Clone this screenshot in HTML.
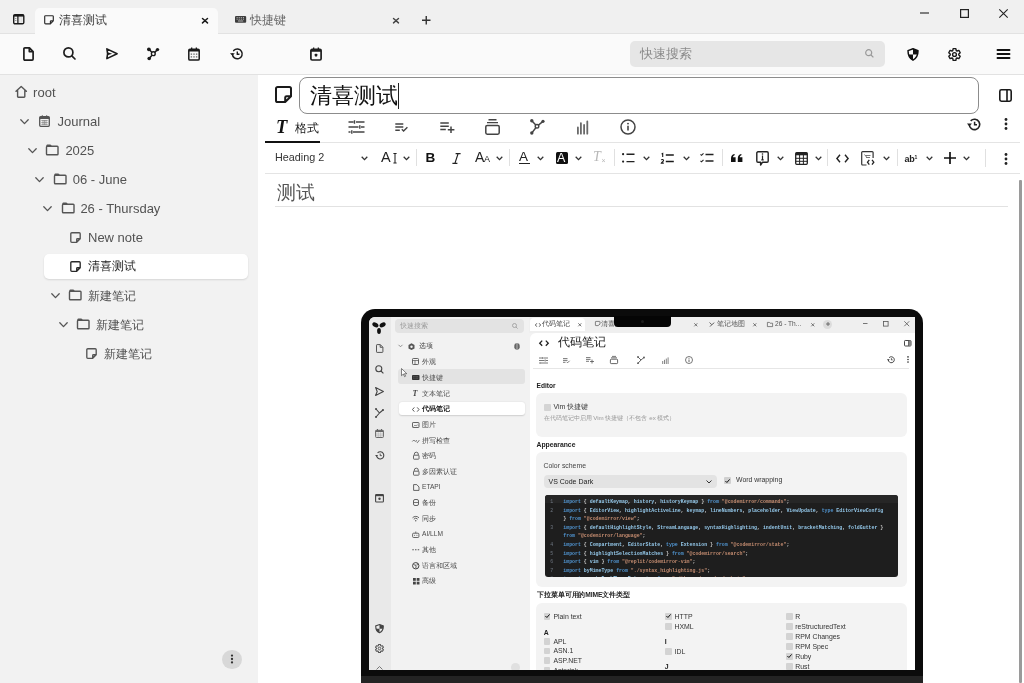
<!DOCTYPE html>
<html><head><meta charset="utf-8">
<style>
*{box-sizing:border-box;margin:0;padding:0}
html,body{width:1024px;height:683px;overflow:hidden;background:#fff;font-family:"Liberation Sans",sans-serif;color:#333}
.a{position:absolute}
svg.i{position:absolute;overflow:visible}
.s{fill:none;stroke:#1e1e1e;stroke-width:1.7;stroke-linecap:round;stroke-linejoin:round}
.f{fill:#1e1e1e;stroke:none}
#tabbar{left:0;top:0;width:1024px;height:34px;background:#f0f0f0;border-bottom:1px solid #e2e2e2}
#toolbar{left:0;top:34px;width:1024px;height:41px;background:#fafafa;border-bottom:1px solid #e2e2e2}
#sidebar{left:0;top:75px;width:258px;height:608px;background:#f2f2f2}
#main{left:258px;top:75px;width:766px;height:608px;background:#fff}
.t{position:absolute;white-space:nowrap;font-size:13px;line-height:16px;color:#4a4a4a}
</style></head><body>
<div id="wrap" style="position:absolute;left:0;top:0;width:1024px;height:683px;will-change:transform">
<div id="tabbar" class="a"></div>
<div id="toolbar" class="a"></div>
<div id="sidebar" class="a"></div>
<div id="main" class="a"></div>

<!-- ===== TAB BAR ===== -->
<svg class="i" style="left:13.4px;top:14.3px" width="11.5" height="10.5" viewBox="0 0 11.5 10.5"><rect x="0.7" y="0.7" width="10.1" height="9.1" rx="1.3" fill="none" stroke="#1a1a1a" stroke-width="1.4"/><path d="M0.7 0.7h10.1v1.9H0.7z" fill="#1a1a1a"/><path d="M4.9 1v8.8" stroke="#1a1a1a" stroke-width="1.3"/><path d="M2.8 4v1M2.8 6v1" stroke="#666" stroke-width="0.9"/><path d="M6.8 3v5.5M8.8 3v5.5" stroke="#ccc" stroke-width="0.6"/></svg>
<div class="a" style="left:34.5px;top:7.5px;width:183px;height:26.5px;background:#fafafa;border-radius:5px 5px 0 0"></div>
<svg class="i" style="left:44.3px;top:15px" width="10" height="9.5" viewBox="0 0 10 9.5"><path d="M1.6 0.7h6.8a0.9 0.9 0 0 1 0.9 0.9v4.2L6.4 8.8H1.6a0.9 0.9 0 0 1-0.9-0.9V1.6a0.9 0.9 0 0 1 0.9-0.9zM9.3 5.8H7.1a0.7 0.7 0 0 0-0.7 0.7v2.3" fill="none" stroke="#2a2a2a" stroke-width="1.15" stroke-linejoin="round"/></svg>
<div class="t" style="left:58.5px;top:11.8px;font-size:12px;color:#3a3a3a">清喜测试</div>
<svg class="i" style="left:202.2px;top:17.7px" width="6" height="5.4" viewBox="0 0 6 5.4"><path d="M0.5 0.5l5 4.4M5.5 0.5l-5 4.4" stroke="#1a1a1a" stroke-width="1.5" stroke-linecap="round"/></svg>
<svg class="i" style="left:235px;top:15.9px" width="11.2" height="6.8" viewBox="0 0 11.2 6.8"><rect x="0" y="0" width="11.2" height="6.8" rx="1.1" fill="#3c3c3c"/><path d="M1.6 1.6h1.1M3.7 1.6h1.1M5.8 1.6h1.1M7.9 1.6h1.1M1.6 3.2h1.1M3.7 3.2h1.1M5.8 3.2h1.1M7.9 3.2h1.1M3 5h5.2" stroke="#d8d8d8" stroke-width="0.8"/></svg>
<div class="t" style="left:250px;top:11.8px;font-size:12px;color:#666">快捷键</div>
<svg class="i" style="left:393.3px;top:17.6px" width="6" height="5.4" viewBox="0 0 6 5.4"><path d="M0.5 0.5l5 4.4M5.5 0.5l-5 4.4" stroke="#444" stroke-width="1.4" stroke-linecap="round"/></svg>
<svg class="i" style="left:421.6px;top:16.2px" width="8.5" height="8.5" viewBox="0 0 8.5 8.5"><path d="M4.25 0v8.5M0 4.25h8.5" stroke="#333" stroke-width="1.4"/></svg>
<svg class="i" style="left:920px;top:12px" width="10" height="2" viewBox="0 0 10 2"><path d="M0 1h9" stroke="#222" stroke-width="1.1"/></svg>
<svg class="i" style="left:960px;top:9px" width="9" height="9" viewBox="0 0 9 9"><rect x="0.6" y="0.6" width="7.8" height="7.8" fill="none" stroke="#222" stroke-width="1.2"/></svg>
<svg class="i" style="left:999px;top:9px" width="9" height="9" viewBox="0 0 9 9"><path d="M0.3 0.3l8.4 8.4M8.7 0.3L0.3 8.7" stroke="#222" stroke-width="1.1"/></svg>

<!-- ===== TOOLBAR ===== -->
<!-- new note -->
<svg class="i" style="left:23px;top:47px" width="11" height="14" viewBox="0 0 11 14"><path class="s" d="M1.9 0.9h4.6l3.6 3.6v7.6a1 1 0 0 1-1 1H1.9a1 1 0 0 1-1-1V1.9a1 1 0 0 1 1-1zM6.3 1v3.6h3.7" stroke-width="1.7"/></svg>
<!-- search -->
<svg class="i" style="left:63px;top:47px" width="13" height="13" viewBox="0 0 13 13"><circle class="s" cx="5.4" cy="5.4" r="4.5" stroke-width="1.7"/><path class="s" d="M8.8 8.8l3.2 3.2" stroke-width="1.7"/></svg>
<!-- send -->
<svg class="i" style="left:105.8px;top:48.3px" width="12" height="11.5" viewBox="0 0 12 11.5"><path d="M0.9 0.9L11.1 5.75 0.9 10.6 1.6 5.75z" fill="none" stroke="#1a1a1a" stroke-width="1.6" stroke-linejoin="round"/><path d="M1.4 4.2L6.2 5.75 1.4 7.3z" fill="#1a1a1a"/></svg>
<!-- graph -->
<svg class="i" style="left:146px;top:47px" width="14" height="14" viewBox="0 0 14 14"><path d="M2.9 2.3L7.3 6.7M11.5 2.6L7.3 6.7M3.2 11.5L7.3 6.7" stroke="#1a1a1a" stroke-width="1.5"/><circle cx="2.9" cy="2.3" r="1.9" fill="#1a1a1a"/><circle cx="11.5" cy="2.6" r="1.7" fill="#1a1a1a"/><circle cx="3.2" cy="11.5" r="1.8" fill="#1a1a1a"/><circle cx="7.3" cy="6.7" r="1.9" fill="#fafafa" stroke="#1a1a1a" stroke-width="1.4"/></svg>
<!-- calendar -->
<svg class="i" style="left:188px;top:47px" width="12" height="14" viewBox="0 0 12 14"><rect x="0.8" y="2.3" width="10.4" height="10.8" rx="1.2" fill="none" stroke="#1a1a1a" stroke-width="1.5"/><path d="M0.8 2.3h10.4v2.2H0.8zM3 0.4h1.3v2.2H3zM7.7 0.4H9v2.2H7.7z" fill="#1a1a1a"/><path d="M2.7 6.4h1.4v1.3H2.7zM5.3 6.4h1.4v1.3H5.3zM7.9 6.4h1.4v1.3H7.9zM2.7 9.2h1.4v1.3H2.7zM5.3 9.2h1.4v1.3H5.3zM7.9 9.2h1.4v1.3H7.9z" fill="#666"/></svg>
<!-- history -->
<svg class="i" style="left:229.5px;top:48px" width="13" height="12" viewBox="0 0 13 12"><path d="M2.4 6a4.9 4.9 0 1 0 1.3-3.4" fill="none" stroke="#1a1a1a" stroke-width="1.5" stroke-linecap="round"/><path d="M0 5.3l2.4 2.5 2.4-2.5z" fill="#1a1a1a"/><path d="M7.3 3.5v2.7h2.2" fill="none" stroke="#1a1a1a" stroke-width="1.4"/></svg>
<!-- calendar star -->
<svg class="i" style="left:310px;top:47px" width="12" height="14" viewBox="0 0 12 14"><rect class="s" x="0.9" y="2.4" width="10.2" height="10.6" rx="1.2" stroke-width="1.7"/><path class="f" d="M0.9 2.4h10.2v2.4H0.9zM3 0.6h1.3v2H3zM7.7 0.6H9v2H7.7z"/><path class="f" d="M6 6.4l1.6 1.2-0.6 1.9H5l-0.6-1.9z"/></svg>
<!-- search box -->
<div class="a" style="left:630px;top:41px;width:255px;height:26px;background:#e6e6e6;border-radius:5px"></div>
<div class="t" style="left:640px;top:46px;font-size:12.5px;color:#8a8a8a">快速搜索</div>
<svg class="i" style="left:865px;top:49px" width="9" height="9" viewBox="0 0 9 9"><circle cx="3.7" cy="3.7" r="3" fill="none" stroke="#999" stroke-width="1.2"/><path d="M6 6l2.4 2.4" stroke="#999" stroke-width="1.2"/></svg>
<!-- shield -->
<svg class="i" style="left:907px;top:48px" width="12" height="13" viewBox="0 0 12 13"><path d="M6 0.8L11 2.6c0 5-2 8.1-5 9.6C3 10.7 1 7.6 1 2.6z" fill="#fafafa" stroke="#111" stroke-width="1.5" stroke-linejoin="round"/><path d="M6 0.8v5.7h5c0.1-1.2 0-2.5 0-3.9zM6 6.5H1.4c0.6 2.8 2.2 4.7 4.6 5.7z" fill="#111"/></svg>
<!-- gear -->
<svg class="i" style="left:948px;top:47.5px" width="13" height="13" viewBox="0 0 13 13"><path d="M4.75 2.57 L5.15 0.65 L7.85 0.65 L8.25 2.57 L9.03 3.02 L10.89 2.41 L12.24 4.75 L10.78 6.05 L10.78 6.95 L12.24 8.25 L10.89 10.59 L9.03 9.98 L8.25 10.43 L7.85 12.35 L5.15 12.35 L4.75 10.43 L3.97 9.98 L2.11 10.59 L0.76 8.25 L2.22 6.95 L2.22 6.05 L0.76 4.75 L2.11 2.41 L3.97 3.02Z" fill="none" stroke="#1a1a1a" stroke-width="1.4" stroke-linejoin="round"/><circle cx="6.5" cy="6.5" r="1.9" fill="none" stroke="#1a1a1a" stroke-width="1.4"/></svg>
<!-- hamburger -->
<svg class="i" style="left:997px;top:49px" width="13" height="10" viewBox="0 0 13 10"><path d="M0.5 1h12M0.5 5h12M0.5 9h12" stroke="#111" stroke-width="1.9" stroke-linecap="round"/></svg>

<!-- ===== SIDEBAR TREE ===== -->
<div class="a" style="left:44px;top:253.5px;width:204px;height:25.5px;background:#fff;border-radius:5px;box-shadow:0 1px 2px rgba(0,0,0,0.12)"></div>
<div class="a" style="left:222px;top:649.5px;width:19.5px;height:19.5px;border-radius:10px;background:#d8d8d8"></div>
<svg class="i" style="left:229.8px;top:654px" width="4" height="10" viewBox="0 0 4 10"><circle cx="2" cy="1.6" r="1.15" fill="#333"/><circle cx="2" cy="5" r="1.15" fill="#333"/><circle cx="2" cy="8.4" r="1.15" fill="#333"/></svg>
<svg class="i" style="left:14.5px;top:86.0px" width="13" height="12" viewBox="0 0 13 12"><path d="M1 5.2L6.2 0.6l5.2 4.6M2.6 4v6.6a0.7 0.7 0 0 0 0.7 0.7h5.8a0.7 0.7 0 0 0 0.7-0.7V4" fill="none" stroke="#555" stroke-width="1.4" stroke-linecap="round" stroke-linejoin="round"/></svg>
<div class="t" style="left:33.1px;top:calc(84.0px + 0.6px);font-size:13px;color:#525252">root</div>
<svg class="i" style="left:20.0px;top:118.8px" width="9" height="6" viewBox="0 0 9 6"><path d="M0.8 0.8l3.7 3.8 3.7-3.8" fill="none" stroke="#555" stroke-width="1.3" stroke-linecap="round" stroke-linejoin="round"/></svg>
<svg class="i" style="left:39.0px;top:114.5px" width="11" height="12" viewBox="0 0 11 12"><rect x="0.7" y="1.7" width="9.6" height="9.6" rx="1" fill="none" stroke="#555" stroke-width="1.3"/><path d="M0.7 1.7h9.6v2.2H0.7zM2.8 0.3h1v1.6h-1zM7.2 0.3h1v1.6h-1z" fill="#555"/><path d="M2.3 5.5h6.4M2.3 7.5h6.4M2.3 9.4h6.4M4 5v5M5.5 5v5M7 5v5" stroke="#888" stroke-width="0.7"/></svg>
<div class="t" style="left:57.5px;top:calc(113.0px + 0.6px);font-size:13px;color:#525252">Journal</div>
<svg class="i" style="left:27.7px;top:147.8px" width="9" height="6" viewBox="0 0 9 6"><path d="M0.8 0.8l3.7 3.8 3.7-3.8" fill="none" stroke="#555" stroke-width="1.3" stroke-linecap="round" stroke-linejoin="round"/></svg>
<svg class="i" style="left:46.0px;top:144.0px" width="13" height="11" viewBox="0 0 13 11"><path d="M1.3 2.2h9.9a0.8 0.8 0 0 1 0.8 0.8v6.9a0.8 0.8 0 0 1-0.8 0.8H1.3a0.8 0.8 0 0 1-0.8-0.8V3a0.8 0.8 0 0 1 0.8-0.8z" fill="none" stroke="#555" stroke-width="1.4"/><path d="M0.5 2.6V1.3Q0.5 0.4 1.4 0.4h2.8Q4.8 0.4 5.1 0.9L5.9 2.6z" fill="#555"/></svg>
<div class="t" style="left:65.4px;top:calc(142.0px + 0.6px);font-size:13px;color:#525252">2025</div>
<svg class="i" style="left:35.4px;top:176.8px" width="9" height="6" viewBox="0 0 9 6"><path d="M0.8 0.8l3.7 3.8 3.7-3.8" fill="none" stroke="#555" stroke-width="1.3" stroke-linecap="round" stroke-linejoin="round"/></svg>
<svg class="i" style="left:53.9px;top:173.0px" width="13" height="11" viewBox="0 0 13 11"><path d="M1.3 2.2h9.9a0.8 0.8 0 0 1 0.8 0.8v6.9a0.8 0.8 0 0 1-0.8 0.8H1.3a0.8 0.8 0 0 1-0.8-0.8V3a0.8 0.8 0 0 1 0.8-0.8z" fill="none" stroke="#555" stroke-width="1.4"/><path d="M0.5 2.6V1.3Q0.5 0.4 1.4 0.4h2.8Q4.8 0.4 5.1 0.9L5.9 2.6z" fill="#555"/></svg>
<div class="t" style="left:72.8px;top:calc(171.0px + 0.6px);font-size:13px;color:#525252">06 - June</div>
<svg class="i" style="left:43.2px;top:205.8px" width="9" height="6" viewBox="0 0 9 6"><path d="M0.8 0.8l3.7 3.8 3.7-3.8" fill="none" stroke="#555" stroke-width="1.3" stroke-linecap="round" stroke-linejoin="round"/></svg>
<svg class="i" style="left:61.5px;top:202.0px" width="13" height="11" viewBox="0 0 13 11"><path d="M1.3 2.2h9.9a0.8 0.8 0 0 1 0.8 0.8v6.9a0.8 0.8 0 0 1-0.8 0.8H1.3a0.8 0.8 0 0 1-0.8-0.8V3a0.8 0.8 0 0 1 0.8-0.8z" fill="none" stroke="#555" stroke-width="1.4"/><path d="M0.5 2.6V1.3Q0.5 0.4 1.4 0.4h2.8Q4.8 0.4 5.1 0.9L5.9 2.6z" fill="#555"/></svg>
<div class="t" style="left:80.4px;top:calc(200.0px + 0.6px);font-size:13px;color:#525252">26 - Thursday</div>
<svg class="i" style="left:69.8px;top:231.5px" width="11" height="11" viewBox="0 0 11 11"><path d="M1.8 0.7h7.4a1 1 0 0 1 1 1v5l-3.5 3.6H1.8a1 1 0 0 1-1-1V1.7a1 1 0 0 1 1-1zM10.2 6.7H7.5a0.8 0.8 0 0 0-0.8 0.8v2.8" fill="none" stroke="#555" stroke-width="1.35" stroke-linejoin="round"/></svg>
<div class="t" style="left:88.0px;top:calc(229.0px + 0.6px);font-size:13px;color:#525252">New note</div>
<svg class="i" style="left:69.8px;top:260.5px" width="11" height="11" viewBox="0 0 11 11"><path d="M1.8 0.7h7.4a1 1 0 0 1 1 1v5l-3.5 3.6H1.8a1 1 0 0 1-1-1V1.7a1 1 0 0 1 1-1zM10.2 6.7H7.5a0.8 0.8 0 0 0-0.8 0.8v2.8" fill="none" stroke="#2a2a2a" stroke-width="1.35" stroke-linejoin="round"/></svg>
<div class="t" style="left:88.0px;top:257.6px;font-size:12.25px;color:#222">清喜测试</div>
<svg class="i" style="left:51.2px;top:292.8px" width="9" height="6" viewBox="0 0 9 6"><path d="M0.8 0.8l3.7 3.8 3.7-3.8" fill="none" stroke="#555" stroke-width="1.3" stroke-linecap="round" stroke-linejoin="round"/></svg>
<svg class="i" style="left:69.2px;top:289.0px" width="13" height="11" viewBox="0 0 13 11"><path d="M1.3 2.2h9.9a0.8 0.8 0 0 1 0.8 0.8v6.9a0.8 0.8 0 0 1-0.8 0.8H1.3a0.8 0.8 0 0 1-0.8-0.8V3a0.8 0.8 0 0 1 0.8-0.8z" fill="none" stroke="#555" stroke-width="1.4"/><path d="M0.5 2.6V1.3Q0.5 0.4 1.4 0.4h2.8Q4.8 0.4 5.1 0.9L5.9 2.6z" fill="#555"/></svg>
<div class="t" style="left:88.2px;top:287.7px;font-size:12.25px;color:#525252">新建笔记</div>
<svg class="i" style="left:58.9px;top:321.8px" width="9" height="6" viewBox="0 0 9 6"><path d="M0.8 0.8l3.7 3.8 3.7-3.8" fill="none" stroke="#555" stroke-width="1.3" stroke-linecap="round" stroke-linejoin="round"/></svg>
<svg class="i" style="left:76.9px;top:318.0px" width="13" height="11" viewBox="0 0 13 11"><path d="M1.3 2.2h9.9a0.8 0.8 0 0 1 0.8 0.8v6.9a0.8 0.8 0 0 1-0.8 0.8H1.3a0.8 0.8 0 0 1-0.8-0.8V3a0.8 0.8 0 0 1 0.8-0.8z" fill="none" stroke="#555" stroke-width="1.4"/><path d="M0.5 2.6V1.3Q0.5 0.4 1.4 0.4h2.8Q4.8 0.4 5.1 0.9L5.9 2.6z" fill="#555"/></svg>
<div class="t" style="left:95.9px;top:316.7px;font-size:12.25px;color:#525252">新建笔记</div>
<svg class="i" style="left:85.5px;top:347.5px" width="11" height="11" viewBox="0 0 11 11"><path d="M1.8 0.7h7.4a1 1 0 0 1 1 1v5l-3.5 3.6H1.8a1 1 0 0 1-1-1V1.7a1 1 0 0 1 1-1zM10.2 6.7H7.5a0.8 0.8 0 0 0-0.8 0.8v2.8" fill="none" stroke="#555" stroke-width="1.35" stroke-linejoin="round"/></svg>
<div class="t" style="left:103.7px;top:345.8px;font-size:12.25px;color:#525252">新建笔记</div>
<!-- ===== MAIN: TITLE ===== -->
<svg class="i" style="left:275px;top:86px" width="17" height="17" viewBox="0 0 17 17"><path d="M2.6 1h11.8a1.6 1.6 0 0 1 1.6 1.6v7.6L10.2 16H2.6A1.6 1.6 0 0 1 1 14.4V2.6A1.6 1.6 0 0 1 2.6 1zM16 10.2h-4.4a1.4 1.4 0 0 0-1.4 1.4V16" fill="none" stroke="#1a1a1a" stroke-width="2" stroke-linejoin="round"/></svg>
<div class="a" style="left:299.3px;top:77.3px;width:679.5px;height:36.5px;border:1.7px solid #8c8c8c;border-radius:8px"></div>
<div class="t" style="left:310px;top:81.8px;font-size:22px;line-height:28px;color:#111">清喜测试</div>
<div class="a" style="left:398px;top:82.5px;width:1px;height:26px;background:#222"></div>
<svg class="i" style="left:999px;top:89px" width="13" height="13" viewBox="0 0 13 13"><rect x="0.8" y="0.8" width="11.4" height="11.4" rx="1.6" fill="none" stroke="#1a1a1a" stroke-width="1.6"/><path d="M8 1v11" stroke="#1a1a1a" stroke-width="1.6"/></svg>

<!-- ===== RIBBON ===== -->
<div class="a" style="left:265px;top:142px;width:755px;height:1px;background:#e4e4e4"></div>
<div class="a" style="left:265px;top:141px;width:55px;height:2px;background:#111"></div>
<div class="t" style="left:276px;top:117px;font-size:18.5px;line-height:20px;font-family:'Liberation Serif',serif;font-weight:bold;font-style:italic;color:#111">T</div>
<div class="t" style="left:295px;top:120px;font-size:12px;line-height:16px;color:#222">格式</div>
<!-- sliders -->
<svg class="i" style="left:348px;top:120px" width="17" height="14" viewBox="0 0 17 14"><path d="M0.5 2h5M8 2h8.5M0.5 7h10M13 7h3.5M0.5 12h2M5 12h11.5M6.5 0.3v3.4M11.8 5.3v3.4M3.8 10.3v3.4" stroke="#444" stroke-width="1.4"/></svg>
<!-- list check -->
<svg class="i" style="left:395px;top:123px" width="13" height="9" viewBox="0 0 13 9"><path d="M0.3 1h8M0.3 4h8M0.3 7.2h4.5M6.8 6.2l1.8 1.8 3.8-3.8" fill="none" stroke="#444" stroke-width="1.4"/></svg>
<!-- list plus -->
<svg class="i" style="left:440px;top:122px" width="15" height="11" viewBox="0 0 15 11"><path d="M0.3 1h8.5M0.3 4.2h8.5M0.3 7.4h5.5M11 4.5v6.5M7.8 7.7h6.6" fill="none" stroke="#444" stroke-width="1.5"/></svg>
<!-- collection -->
<svg class="i" style="left:485px;top:119px" width="15" height="16" viewBox="0 0 15 16"><path d="M3.5 0.8h8M2 3.6h11" stroke="#444" stroke-width="1.4"/><rect x="0.8" y="6.4" width="13.4" height="8.8" rx="1.4" fill="none" stroke="#444" stroke-width="1.5"/></svg>
<!-- graph -->
<svg class="i" style="left:530px;top:119px" width="15" height="16" viewBox="0 0 15 16"><path d="M1.8 1.8L7 7.3l6-5M7 7.3l-5.3 6.8" stroke="#444" stroke-width="1.5" fill="none"/><circle cx="1.8" cy="1.8" r="1.7" fill="#444"/><circle cx="13" cy="2.3" r="1.6" fill="#444"/><circle cx="1.8" cy="14" r="1.7" fill="#444"/><circle cx="7" cy="7.3" r="1.8" fill="#fff" stroke="#444" stroke-width="1.4"/></svg>
<!-- bar chart -->
<svg class="i" style="left:576px;top:120.6px" width="13" height="13" viewBox="0 0 13 13"><path d="M1.9 12.7V6.4M4.9 12.7V2.1M8.1 12.7V3.9M11.3 12.7V0.4" stroke="#6a6a6a" stroke-width="1.8" stroke-linecap="round"/></svg>
<!-- info -->
<svg class="i" style="left:620px;top:118.5px" width="16" height="16" viewBox="0 0 16 16"><circle cx="8" cy="8" r="7" fill="none" stroke="#444" stroke-width="1.5"/><path d="M8 6.8v4.7" stroke="#444" stroke-width="1.6"/><circle cx="8" cy="4.6" r="0.95" fill="#444"/></svg>
<!-- history right -->
<svg class="i" style="left:967px;top:117.5px" width="14" height="13" viewBox="0 0 14 13"><path d="M2.3 6.5a5.2 5.2 0 1 0 1.4-3.6" fill="none" stroke="#222" stroke-width="1.6"/><path d="M0 5.6l2.4 2.8 2.5-2.8z" fill="#222"/><path d="M7.6 3.8v3h2.4" fill="none" stroke="#222" stroke-width="1.5"/></svg>
<svg class="i" style="left:1003.5px;top:118px" width="4" height="12" viewBox="0 0 4 12"><circle cx="2" cy="1.5" r="1.4" fill="#222"/><circle cx="2" cy="6" r="1.4" fill="#222"/><circle cx="2" cy="10.5" r="1.4" fill="#222"/></svg>

<!-- ===== FORMAT TOOLBAR ===== -->
<div class="a" style="left:265px;top:173px;width:755px;height:1px;background:#e4e4e4"></div>
<div class="t" style="left:275px;top:150px;font-size:10.8px;line-height:14px;color:#333">Heading 2</div>
<svg class="i" style="left:360.5px;top:156px" width="7" height="5" viewBox="0 0 7 5"><path d="M0.7 0.7l2.8 2.9 2.8-2.9" fill="none" stroke="#333" stroke-width="1.3"/></svg>
<div class="t" style="left:381px;top:149px;font-size:14.5px;line-height:16px;color:#222">A</div>
<svg class="i" style="left:392.6px;top:152.6px" width="4" height="10.5" viewBox="0 0 4 10.5"><path d="M2 0.5v9.5M0.4 0.5h3.2M0.4 10h3.2" stroke="#222" stroke-width="1.05"/></svg>
<svg class="i" style="left:402.5px;top:156px" width="7" height="5" viewBox="0 0 7 5"><path d="M0.7 0.7l2.8 2.9 2.8-2.9" fill="none" stroke="#333" stroke-width="1.3"/></svg>
<div class="a" style="left:416px;top:149px;width:1px;height:17px;background:#e0e0e0"></div>
<div class="t" style="left:425.5px;top:149.8px;font-size:13.5px;line-height:16px;font-weight:bold;color:#111">B</div>
<svg class="i" style="left:452px;top:152.5px" width="9" height="11" viewBox="0 0 9 11"><path d="M3.6 0.6h5M0.4 10.4h5M6.1 0.6L2.9 10.4" stroke="#222" stroke-width="1.2" fill="none"/></svg>
<div class="t" style="left:475px;top:149px;font-size:14px;line-height:16px;color:#222">A</div>
<div class="t" style="left:484px;top:154px;font-size:9px;line-height:11px;color:#222">A</div>
<svg class="i" style="left:495.5px;top:156px" width="7" height="5" viewBox="0 0 7 5"><path d="M0.7 0.7l2.8 2.9 2.8-2.9" fill="none" stroke="#333" stroke-width="1.3"/></svg>
<div class="a" style="left:508.5px;top:149px;width:1px;height:17px;background:#e0e0e0"></div>
<div class="t" style="left:519px;top:148.5px;font-size:13.5px;line-height:16px;color:#222">A</div>
<div class="a" style="left:519px;top:163px;width:10.5px;height:1.4px;background:#222"></div>
<svg class="i" style="left:537px;top:156px" width="7" height="5" viewBox="0 0 7 5"><path d="M0.7 0.7l2.8 2.9 2.8-2.9" fill="none" stroke="#333" stroke-width="1.3"/></svg>
<div class="a" style="left:555.5px;top:152px;width:12.3px;height:12px;background:#111;border-radius:1.5px"></div>
<div class="t" style="left:557px;top:150.5px;font-size:12.5px;line-height:14px;color:#fff">A</div>
<svg class="i" style="left:575px;top:156px" width="7" height="5" viewBox="0 0 7 5"><path d="M0.7 0.7l2.8 2.9 2.8-2.9" fill="none" stroke="#333" stroke-width="1.3"/></svg>
<div class="t" style="left:593px;top:149px;font-size:14px;line-height:16px;font-family:'Liberation Serif',serif;font-style:italic;color:#b8b8b8">T</div>
<div class="t" style="left:601.5px;top:156.5px;font-size:7px;line-height:8px;color:#b8b8b8">×</div>
<div class="a" style="left:614px;top:149px;width:1px;height:17px;background:#e0e0e0"></div>
<!-- bullets -->
<svg class="i" style="left:622px;top:153px" width="13" height="10" viewBox="0 0 13 10"><circle cx="1.1" cy="1.2" r="1.1" fill="#222"/><circle cx="1.1" cy="8.6" r="1.1" fill="#222"/><path d="M4.5 1.2h8M4.5 8.6h8" stroke="#222" stroke-width="1.4"/></svg>
<svg class="i" style="left:643px;top:156px" width="7" height="5" viewBox="0 0 7 5"><path d="M0.7 0.7l2.8 2.9 2.8-2.9" fill="none" stroke="#333" stroke-width="1.3"/></svg>
<svg class="i" style="left:660.5px;top:152.5px" width="13" height="11" viewBox="0 0 13 11"><path d="M0.6 0.9l1.1-0.5v3.6" fill="none" stroke="#1a1a1a" stroke-width="1.1"/><path d="M0.3 7.1c0.2-0.8 2.3-0.9 2.3 0.3 0 0.9-1.5 1.4-2.2 2.7h2.4" fill="none" stroke="#1a1a1a" stroke-width="1.05"/><path d="M4.8 2h8M4.8 8.4h8" stroke="#1a1a1a" stroke-width="1.5"/></svg>
<svg class="i" style="left:682.5px;top:156px" width="7" height="5" viewBox="0 0 7 5"><path d="M0.7 0.7l2.8 2.9 2.8-2.9" fill="none" stroke="#333" stroke-width="1.3"/></svg>
<svg class="i" style="left:699.5px;top:153px" width="14" height="10" viewBox="0 0 14 10"><path d="M0.5 1.3l1 1 2-2M0.5 7.8l1 1 2-2" fill="none" stroke="#222" stroke-width="1.1"/><path d="M5.5 1.5h8M5.5 8h8" stroke="#222" stroke-width="1.4"/></svg>
<div class="a" style="left:721.5px;top:149px;width:1px;height:17px;background:#e0e0e0"></div>
<!-- quote -->
<svg class="i" style="left:731px;top:154px" width="12" height="8" viewBox="0 0 12 8"><path d="M0 4.5C0 1.8 1.2 0.4 3.4 0l0.4 0.9C2.6 1.3 2 2.2 2 3.2h2.6V8H0zM6.8 4.5c0-2.7 1.2-4.1 3.4-4.5l0.4 0.9C9.4 1.3 8.8 2.2 8.8 3.2h2.6V8H6.8z" fill="#111"/></svg>
<!-- callout -->
<svg class="i" style="left:755.5px;top:150.5px" width="13" height="15" viewBox="0 0 13 15"><path d="M2 0.8h9a1.2 1.2 0 0 1 1.2 1.2v8a1.2 1.2 0 0 1-1.2 1.2H6.6L4.6 14V11.2H2A1.2 1.2 0 0 1 0.8 10V2A1.2 1.2 0 0 1 2 0.8z" fill="none" stroke="#222" stroke-width="1.4" stroke-linejoin="round"/><path d="M6.5 4.6v4.2M5.3 8.8h2.4" stroke="#222" stroke-width="1.2"/><circle cx="6.5" cy="3" r="0.8" fill="#222"/></svg>
<svg class="i" style="left:777px;top:156px" width="7" height="5" viewBox="0 0 7 5"><path d="M0.7 0.7l2.8 2.9 2.8-2.9" fill="none" stroke="#333" stroke-width="1.3"/></svg>
<!-- table -->
<svg class="i" style="left:795px;top:151.5px" width="13" height="13" viewBox="0 0 13 13"><rect x="0.7" y="0.7" width="11.6" height="11.6" rx="1" fill="none" stroke="#222" stroke-width="1.3"/><path d="M0.7 0.7h11.6v2.6H0.7z" fill="#222"/><path d="M0.7 6.3h11.6M0.7 9.3h11.6M4.6 3v9.3M8.4 3v9.3" stroke="#222" stroke-width="1"/></svg>
<svg class="i" style="left:814.5px;top:156px" width="7" height="5" viewBox="0 0 7 5"><path d="M0.7 0.7l2.8 2.9 2.8-2.9" fill="none" stroke="#333" stroke-width="1.3"/></svg>
<div class="a" style="left:827px;top:149px;width:1px;height:17px;background:#e0e0e0"></div>
<!-- code <> -->
<svg class="i" style="left:835.5px;top:153.5px" width="13" height="9" viewBox="0 0 13 9"><path d="M4 0.8L0.9 4.5 4 8.2M9 0.8l3.1 3.7L9 8.2" fill="none" stroke="#222" stroke-width="1.4"/></svg>
<!-- code block -->
<svg class="i" style="left:861px;top:150.5px" width="15" height="15" viewBox="0 0 15 15"><path d="M5.5 14H1.6a0.9 0.9 0 0 1-0.9-0.9V1.6a0.9 0.9 0 0 1 0.9-0.9h9.6a0.9 0.9 0 0 1 0.9 0.9v5.5" fill="none" stroke="#333" stroke-width="1.2"/><path d="M3.5 3.5l2 2.5M4.5 4.5h5M5 6.5h4" stroke="#666" stroke-width="0.9"/><path d="M8.3 8.8L6.5 11.2l1.8 2.4M11 8.8l1.8 2.4-1.8 2.4" fill="none" stroke="#222" stroke-width="1.3"/></svg>
<svg class="i" style="left:883px;top:156px" width="7" height="5" viewBox="0 0 7 5"><path d="M0.7 0.7l2.8 2.9 2.8-2.9" fill="none" stroke="#333" stroke-width="1.3"/></svg>
<div class="a" style="left:896.5px;top:149px;width:1px;height:17px;background:#e0e0e0"></div>
<div class="t" style="left:904.5px;top:151.5px;font-size:9px;line-height:10px;font-weight:bold;color:#222;letter-spacing:-0.3px">ab<span style="font-size:5px;vertical-align:3px">1</span></div>
<svg class="i" style="left:925.5px;top:156px" width="7" height="5" viewBox="0 0 7 5"><path d="M0.7 0.7l2.8 2.9 2.8-2.9" fill="none" stroke="#333" stroke-width="1.3"/></svg>
<svg class="i" style="left:943.5px;top:152px" width="12" height="12" viewBox="0 0 12 12"><path d="M6 0v12M0 6h12" stroke="#111" stroke-width="1.7"/></svg>
<svg class="i" style="left:963px;top:156px" width="7" height="5" viewBox="0 0 7 5"><path d="M0.7 0.7l2.8 2.9 2.8-2.9" fill="none" stroke="#333" stroke-width="1.3"/></svg>
<div class="a" style="left:985px;top:149px;width:1px;height:18px;background:#e0e0e0"></div>
<svg class="i" style="left:1003.5px;top:152.5px" width="4" height="12" viewBox="0 0 4 12"><circle cx="2" cy="1.5" r="1.4" fill="#222"/><circle cx="2" cy="6" r="1.4" fill="#222"/><circle cx="2" cy="10.5" r="1.4" fill="#222"/></svg>

<!-- ===== CONTENT ===== -->
<div class="t" style="left:277px;top:181px;font-size:19px;line-height:24px;color:#555">测试</div>
<div class="a" style="left:275px;top:206px;width:733px;height:1px;background:#e2e2e2"></div>
<div class="a" style="left:1019px;top:180px;width:2.5px;height:503px;background:#9a9a9a;border-radius:1px"></div>

<!-- ===== LAPTOP ===== -->
<div class="a" style="left:0;top:0;width:1024px;height:683px;filter:blur(0px)">
<div class="a" style="left:361.0px;top:309.0px;width:562.0px;height:380.0px;background:#0b0b0b;border-radius:14px 14px 0 0"></div>
<div class="a" style="left:361.0px;top:675.5px;width:562.0px;height:8.0px;background:#232323;"></div>
<div class="a" style="left:369px;top:317px;width:546px;height:353px;background:#f2f2f2;border-radius:6px 6px 0 0;overflow:hidden">
<div class="a" style="left:0.0px;top:0.0px;width:22.0px;height:353.0px;background:#e9e9e9;"></div>
</div>
<svg class="i" style="left:372.3px;top:322.0px" width="14" height="12" viewBox="0 0 14 12"><ellipse cx="3.4" cy="2.9" rx="3.3" ry="2.1" transform="rotate(30 3.4 2.9)" fill="#111"/><ellipse cx="10.6" cy="2.9" rx="3.3" ry="2.1" transform="rotate(-30 10.6 2.9)" fill="#111"/><ellipse cx="7" cy="9" rx="1.9" ry="3" fill="#111"/></svg>
<svg class="i" style="left:375.8px;top:343.5px" width="7.5" height="8.5" viewBox="0 0 7.5 8.5"><path d="M1.1 0.6h3.2l2.6 2.6v4.6a0.6 0.6 0 0 1-0.6 0.6H1.1a0.6 0.6 0 0 1-0.6-0.6V1.2a0.6 0.6 0 0 1 0.6-0.6zM4.2 0.7v2.6h2.6" fill="none" stroke="#555" stroke-width="1"/></svg>
<svg class="i" style="left:375.0px;top:365.0px" width="9" height="9" viewBox="0 0 9 9"><circle cx="3.8" cy="3.8" r="3" fill="none" stroke="#444" stroke-width="1.1"/><path d="M6 6l2.4 2.4" stroke="#444" stroke-width="1.1"/></svg>
<svg class="i" style="left:375.0px;top:386.5px" width="9" height="9" viewBox="0 0 9 9"><path d="M0.6 0.6l7.8 3.9-7.8 3.9 1.6-3.9z" fill="none" stroke="#444" stroke-width="1.1" stroke-linejoin="round"/></svg>
<svg class="i" style="left:375.0px;top:407.5px" width="9" height="10" viewBox="0 0 9 10"><path d="M1 1l3.5 4 3.5-3M4.5 5L1 9" fill="none" stroke="#444" stroke-width="1.1"/><circle cx="1" cy="1" r="1" fill="#444"/><circle cx="8" cy="2" r="1" fill="#444"/><circle cx="1" cy="9" r="1" fill="#444"/></svg>
<svg class="i" style="left:375.0px;top:429.0px" width="9" height="9" viewBox="0 0 9 9"><rect x="0.6" y="1.3" width="7.8" height="7.2" rx="0.8" fill="none" stroke="#666" stroke-width="1"/><path d="M0.6 1.3h7.8v1.8H0.6zM2 0h1v1.5H2zM6 0h1v1.5H6z" fill="#666"/><path d="M1 5h7M1 6.8h7M3.3 3.2v5M5.6 3.2v5" stroke="#aaa" stroke-width="0.5"/></svg>
<svg class="i" style="left:375.0px;top:450.5px" width="9.5" height="9" viewBox="0 0 9.5 9"><path d="M1.6 4.5a3.6 3.6 0 1 0 1-2.6" fill="none" stroke="#444" stroke-width="1.1"/><path d="M0 4l1.6 1.8L3.2 4z" fill="#444"/><path d="M5.2 2.6v2h1.6" fill="none" stroke="#444" stroke-width="0.9"/></svg>
<svg class="i" style="left:375.0px;top:492.5px" width="9" height="9.5" viewBox="0 0 9 9.5"><rect x="0.6" y="1.6" width="7.8" height="7.4" rx="0.8" fill="none" stroke="#444" stroke-width="1.1"/><path d="M0.6 1.6h7.8v1.6H0.6z" fill="#444"/><circle cx="4.5" cy="5.8" r="1.2" fill="#444"/></svg>
<svg class="i" style="left:375.0px;top:623.5px" width="9" height="9" viewBox="0 0 9 9"><path d="M4.5 0.5L8.3 1.9c0 3.6-1.4 5.8-3.8 6.8C2.1 7.7 0.7 5.5 0.7 1.9z" fill="none" stroke="#444" stroke-width="1.1"/><path d="M4.5 0.5v4.2h3.7c0.1-0.9 0.1-1.8 0.1-2.8zM4.5 4.7H0.9c0.4 2 1.6 3.3 3.6 4z" fill="#444"/></svg>
<svg class="i" style="left:374.8px;top:643.8px" width="9" height="9" viewBox="0 0 9 9"><g transform="scale(0.69)"><path d="M4.75 2.57 L5.15 0.65 L7.85 0.65 L8.25 2.57 L9.03 3.02 L10.89 2.41 L12.24 4.75 L10.78 6.05 L10.78 6.95 L12.24 8.25 L10.89 10.59 L9.03 9.98 L8.25 10.43 L7.85 12.35 L5.15 12.35 L4.75 10.43 L3.97 9.98 L2.11 10.59 L0.76 8.25 L2.22 6.95 L2.22 6.05 L0.76 4.75 L2.11 2.41 L3.97 3.02Z" fill="none" stroke="#555" stroke-width="1.5" stroke-linejoin="round"/><circle cx="6.5" cy="6.5" r="1.9" fill="none" stroke="#555" stroke-width="1.4"/></g></svg>
<svg class="i" style="left:376.0px;top:666.0px" width="7" height="4" viewBox="0 0 7 4"><path d="M0.5 3.5l3-3 3 3" fill="none" stroke="#777" stroke-width="1"/></svg>
<div class="a" style="left:395.0px;top:319.3px;width:129.0px;height:13.3px;background:#e3e3e3;border-radius:4px"></div>
<div class="t" style="left:399.5px;top:321.77px;font-size:6.5px;line-height:8.45px;color:#9a9a9a;">快速搜索</div>
<svg class="i" style="left:512.0px;top:323.0px" width="6" height="6" viewBox="0 0 6 6"><circle cx="2.5" cy="2.5" r="2" fill="none" stroke="#999" stroke-width="0.8"/><path d="M4 4l1.6 1.6" stroke="#999" stroke-width="0.8"/></svg>
<div class="a" style="left:398.3px;top:369.0px;width:126.7px;height:15.2px;background:#e3e3e3;border-radius:3px"></div>
<div class="a" style="left:399.0px;top:402.0px;width:126.0px;height:13.0px;background:#ffffff;border-radius:3px;box-shadow:0 0.5px 1.5px rgba(0,0,0,0.15)"></div>
<svg class="i" style="left:398.0px;top:344.3px" width="5" height="4" viewBox="0 0 5 4"><path d="M0.5 0.8l2 2 2-2" fill="none" stroke="#777" stroke-width="0.8"/></svg>
<svg class="i" style="left:407.8px;top:342.6px" width="7" height="7" viewBox="0 0 7 7"><path d="M3.5 0.3l3 1.7v3.4l-3 1.7-3-1.7V2z" fill="#555"/><circle cx="3.5" cy="3.7" r="1.2" fill="#f2f2f2"/></svg>
<div class="t" style="left:418.8px;top:341.98px;font-size:6.8px;line-height:8.84px;color:#444;">选项</div>
<svg class="i" style="left:514.0px;top:343.0px" width="6" height="7" viewBox="0 0 6 7"><rect x="0.3" y="0.3" width="5.4" height="6.4" rx="2.4" fill="#666"/><path d="M3 0.5v6" stroke="#ddd" stroke-width="0.7"/></svg>
<svg class="i" style="left:412.0px;top:358.3px" width="7" height="7" viewBox="0 0 7 7"><rect x="0.5" y="0.5" width="6" height="6" rx="0.8" fill="none" stroke="#555" stroke-width="0.9"/><path d="M0.5 2.5h6M3 2.5v4" stroke="#555" stroke-width="0.7"/></svg>
<div class="t" style="left:422.0px;top:357.81px;font-size:6.6px;line-height:8.58px;color:#4a4a4a;">外观</div>
<svg class="i" style="left:412.0px;top:375.0px" width="7.5" height="5" viewBox="0 0 7.5 5"><rect x="0" y="0" width="7.5" height="5" rx="0.8" fill="#333"/><path d="M1.5 1.6h4.5M1.5 3.2h4.5" stroke="#aaa" stroke-width="0.5" stroke-dasharray="0.6 0.6"/></svg>
<div class="t" style="left:422.0px;top:373.51px;font-size:6.6px;line-height:8.58px;color:#4a4a4a;">快捷键</div>
<div class="t" style="left:412.5px;top:389.0px;font-size:8px;line-height:9px;font-family:'Liberation Serif',serif;font-weight:bold;font-style:italic;color:#444">T</div>
<div class="t" style="left:422.0px;top:389.51px;font-size:6.6px;line-height:8.58px;color:#4a4a4a;">文本笔记</div>
<svg class="i" style="left:412.0px;top:406.8px" width="7.5" height="5" viewBox="0 0 7.5 5"><path d="M2.3 0.4L0.5 2.5l1.8 2.1M5.2 0.4L7 2.5 5.2 4.6" fill="none" stroke="#444" stroke-width="0.9"/></svg>
<div class="t" style="left:422.0px;top:405.31px;font-size:6.6px;line-height:8.58px;color:#222;font-weight:bold">代码笔记</div>
<svg class="i" style="left:412.0px;top:421.8px" width="7.5" height="6" viewBox="0 0 7.5 6"><rect x="0.5" y="0.5" width="6.5" height="5" rx="0.6" fill="none" stroke="#555" stroke-width="0.9"/><path d="M1.5 4.5l1.5-1.5 1 1 1.5-1.2 0.8 0.8" fill="none" stroke="#555" stroke-width="0.6"/></svg>
<div class="t" style="left:422.0px;top:420.81px;font-size:6.6px;line-height:8.58px;color:#4a4a4a;">图片</div>
<svg class="i" style="left:412.0px;top:438.5px" width="7.5" height="4" viewBox="0 0 7.5 4"><path d="M0.3 2.5l1.5-1.5 1.5 1.5 1.5-1.5M4.5 2.8l1 0.8 1.8-2.5" fill="none" stroke="#555" stroke-width="0.8"/></svg>
<div class="t" style="left:422.0px;top:436.51px;font-size:6.6px;line-height:8.58px;color:#4a4a4a;">拼写检查</div>
<svg class="i" style="left:412.5px;top:452.0px" width="6.5" height="7.5" viewBox="0 0 6.5 7.5"><path d="M1.3 3.2V2.2a2 2 0 0 1 4 0v1" fill="none" stroke="#555" stroke-width="0.9"/><rect x="0.5" y="3.2" width="5.5" height="4" rx="0.6" fill="none" stroke="#555" stroke-width="0.9"/></svg>
<div class="t" style="left:422.0px;top:451.81px;font-size:6.6px;line-height:8.58px;color:#4a4a4a;">密码</div>
<svg class="i" style="left:412.5px;top:468.0px" width="6.5" height="7.5" viewBox="0 0 6.5 7.5"><path d="M1.3 3.2V2.2a2 2 0 0 1 4 0v1" fill="none" stroke="#555" stroke-width="0.9"/><rect x="0.5" y="3.2" width="5.5" height="4" rx="0.6" fill="none" stroke="#555" stroke-width="0.9"/></svg>
<div class="t" style="left:422.0px;top:467.81px;font-size:6.6px;line-height:8.58px;color:#4a4a4a;">多因素认证</div>
<svg class="i" style="left:412.5px;top:483.7px" width="6.5" height="7" viewBox="0 0 6.5 7"><path d="M0.6 0.6h3.2l2.2 2.4v3.4H0.6z" fill="none" stroke="#555" stroke-width="0.9"/></svg>
<div class="t" style="left:422.0px;top:483.21px;font-size:6.6px;line-height:8.58px;color:#4a4a4a;">ETAPI</div>
<svg class="i" style="left:412.5px;top:499.3px" width="6" height="7" viewBox="0 0 6 7"><rect x="0.5" y="0.5" width="5" height="6" rx="1.5" fill="none" stroke="#555" stroke-width="0.9"/><path d="M0.5 3.5h5" stroke="#555" stroke-width="0.8"/></svg>
<div class="t" style="left:422.0px;top:498.81px;font-size:6.6px;line-height:8.58px;color:#4a4a4a;">备份</div>
<svg class="i" style="left:412.0px;top:516.0px" width="7.5" height="5.5" viewBox="0 0 7.5 5.5"><path d="M0.5 1.8a4.5 4.5 0 0 1 6.5 0M1.8 3.2a2.6 2.6 0 0 1 3.9 0" fill="none" stroke="#555" stroke-width="0.9"/><circle cx="3.75" cy="4.8" r="0.7" fill="#555"/></svg>
<div class="t" style="left:422.0px;top:514.51px;font-size:6.6px;line-height:8.58px;color:#4a4a4a;">同步</div>
<svg class="i" style="left:412.0px;top:530.7px" width="7.5" height="7" viewBox="0 0 7.5 7"><rect x="0.6" y="2.2" width="6.3" height="4.3" rx="1" fill="none" stroke="#555" stroke-width="0.9"/><path d="M3.75 0.5v1.7" stroke="#555" stroke-width="0.8"/><circle cx="2.6" cy="4.3" r="0.55" fill="#555"/><circle cx="4.9" cy="4.3" r="0.55" fill="#555"/></svg>
<div class="t" style="left:422.0px;top:530.21px;font-size:6.6px;line-height:8.58px;color:#4a4a4a;">AI/LLM</div>
<svg class="i" style="left:412.0px;top:549.1px" width="7.5" height="1.5" viewBox="0 0 7.5 1.5"><path d="M0.3 0.75h1.5M3 0.75h1.5M5.7 0.75h1.5" stroke="#555" stroke-width="1.2"/></svg>
<div class="t" style="left:422.0px;top:545.81px;font-size:6.6px;line-height:8.58px;color:#4a4a4a;">其他</div>
<svg class="i" style="left:412.0px;top:562.0px" width="7.5" height="7.5" viewBox="0 0 7.5 7.5"><circle cx="3.75" cy="3.75" r="3.2" fill="none" stroke="#444" stroke-width="1"/><path d="M1.5 2.5c1 0 1.5 1 2.5 0.8 0.5 1.2-0.8 2.5 0.2 3.2M5.5 1.5c-0.8 0.5-0.5 1.2 0.5 1.5" fill="none" stroke="#444" stroke-width="0.9"/></svg>
<div class="t" style="left:422.0px;top:561.81px;font-size:6.6px;line-height:8.58px;color:#4a4a4a;">语言和区域</div>
<svg class="i" style="left:412.5px;top:578.2px" width="6.5" height="6.5" viewBox="0 0 6.5 6.5"><rect x="0" y="0" width="2.8" height="2.8" fill="#444"/><rect x="3.7" y="0" width="2.8" height="2.8" fill="#444"/><rect x="0" y="3.7" width="2.8" height="2.8" fill="#444"/><rect x="3.7" y="3.7" width="2.8" height="2.8" fill="#444"/></svg>
<div class="t" style="left:422.0px;top:577.41px;font-size:6.6px;line-height:8.58px;color:#4a4a4a;">高级</div>
<div class="a" style="left:510.5px;top:662.5px;width:9.0px;height:9.0px;background:#e0e0e0;border-radius:5px"></div>
<svg class="i" style="left:401.0px;top:368.0px" width="6" height="9" viewBox="0 0 6 9"><path d="M0.5 0.5v7.2l1.8-1.6 1.3 2.6 1-0.5-1.2-2.5h2.4z" fill="#fff" stroke="#333" stroke-width="0.6" stroke-linejoin="round"/></svg>
<div class="a" style="left:529.0px;top:317.0px;width:386.0px;height:16.0px;background:#efefef;"></div>
<div class="a" style="left:530.2px;top:318.0px;width:55.2px;height:13.0px;background:#ffffff;border-radius:4px 4px 0 0"></div>
<svg class="i" style="left:534.5px;top:322.5px" width="6" height="4" viewBox="0 0 6 4"><path d="M1.8 0.3L0.4 2l1.4 1.7M4.2 0.3L5.6 2 4.2 3.7" fill="none" stroke="#333" stroke-width="0.8"/></svg>
<div class="t" style="left:542.0px;top:320.01px;font-size:6.6px;line-height:8.58px;color:#444;">代码笔记</div>
<svg class="i" style="left:577.5px;top:322.5px" width="3.5" height="3.5" viewBox="0 0 3.5 3.5"><path d="M0.3 0.3l3 3M3.3 0.3l-3 3" stroke="#555" stroke-width="0.8"/></svg>
<svg class="i" style="left:594.5px;top:321.3px" width="5" height="5" viewBox="0 0 5 5"><path d="M0.9 0.4h3.6a0.5 0.5 0 0 1 0.5 0.5v2.2L3.1 4.6H0.9a0.5 0.5 0 0 1-0.5-0.5V0.9a0.5 0.5 0 0 1 0.5-0.5z" fill="none" stroke="#555" stroke-width="0.7"/></svg>
<div class="t" style="left:601.0px;top:320.01px;font-size:6.6px;line-height:8.58px;color:#555;">清喜测试</div>
<svg class="i" style="left:694.0px;top:322.5px" width="3.5" height="3.5" viewBox="0 0 3.5 3.5"><path d="M0.3 0.3l3 3M3.3 0.3l-3 3" stroke="#555" stroke-width="0.8"/></svg>
<svg class="i" style="left:709.0px;top:321.5px" width="6" height="5" viewBox="0 0 6 5"><path d="M0.5 0.5l2.3 2.2 2.5-2M2.8 2.7L1 4.6" fill="none" stroke="#444" stroke-width="0.8"/></svg>
<div class="t" style="left:717.0px;top:320.01px;font-size:6.6px;line-height:8.58px;color:#555;">笔记地图</div>
<svg class="i" style="left:752.5px;top:322.5px" width="3.5" height="3.5" viewBox="0 0 3.5 3.5"><path d="M0.3 0.3l3 3M3.3 0.3l-3 3" stroke="#555" stroke-width="0.8"/></svg>
<svg class="i" style="left:766.5px;top:321.5px" width="6" height="5" viewBox="0 0 6 5"><path d="M0.4 0.4h2l0.7 0.8h2.5v3.4H0.4z" fill="none" stroke="#555" stroke-width="0.7"/></svg>
<div class="t" style="left:775.0px;top:320.01px;font-size:6.6px;line-height:8.58px;color:#555;">26 - Th...</div>
<svg class="i" style="left:810.5px;top:322.5px" width="3.5" height="3.5" viewBox="0 0 3.5 3.5"><path d="M0.3 0.3l3 3M3.3 0.3l-3 3" stroke="#555" stroke-width="0.8"/></svg>
<div class="a" style="left:823.3px;top:319.5px;width:9.0px;height:9.0px;background:#dcdcdc;border-radius:5px"></div>
<svg class="i" style="left:825.8px;top:322.0px" width="4" height="4" viewBox="0 0 4 4"><path d="M2 0v4M0 2h4" stroke="#555" stroke-width="0.8"/></svg>
<svg class="i" style="left:862.5px;top:322.8px" width="4.5" height="1" viewBox="0 0 4.5 1"><path d="M0 0.5h4.5" stroke="#555" stroke-width="0.8"/></svg>
<svg class="i" style="left:882.5px;top:320.5px" width="5.5" height="5.5" viewBox="0 0 5.5 5.5"><rect x="0.4" y="0.4" width="4.7" height="4.7" fill="none" stroke="#555" stroke-width="0.8"/></svg>
<svg class="i" style="left:904.0px;top:320.5px" width="5.5" height="5.5" viewBox="0 0 5.5 5.5"><path d="M0.3 0.3l4.9 4.9M5.2 0.3L0.3 5.2" stroke="#555" stroke-width="0.8"/></svg>
<div class="a" style="left:613.8px;top:316.0px;width:57.6px;height:11.2px;background:#050505;border-radius:0 0 4px 4px"></div>
<div class="a" style="left:640.5px;top:319.5px;width:3.0px;height:3.0px;background:#1c1c1c;border-radius:2px"></div>
<div class="a" style="left:529.9px;top:333.0px;width:385.1px;height:337.0px;background:#ffffff;border-radius:6px 0 0 0"></div>
<svg class="i" style="left:538.6px;top:340.0px" width="10" height="6.5" viewBox="0 0 10 6.5"><path d="M3.2 0.6L0.7 3.2l2.5 2.6M6.8 0.6l2.5 2.6-2.5 2.6" fill="none" stroke="#222" stroke-width="1.3"/></svg>
<div class="t" style="left:557.5px;top:335.13px;font-size:11.8px;line-height:15.34px;color:#222;">代码笔记</div>
<svg class="i" style="left:903.8px;top:340.0px" width="7.5" height="6.5" viewBox="0 0 7.5 6.5"><rect x="0.5" y="0.5" width="6.5" height="5.5" rx="0.8" fill="none" stroke="#333" stroke-width="0.9"/><path d="M4.6 0.5v5.5" stroke="#333" stroke-width="0.9"/><rect x="4.6" y="0.5" width="2.4" height="5.5" fill="#888"/></svg>
<svg class="i" style="left:539.0px;top:357.0px" width="9" height="7" viewBox="0 0 9 7"><path d="M0 1h3M4.5 1h4.5M0 3.5h5.5M7 3.5h2M0 6h1.2M2.7 6h6.3M3.7 0v2M6.2 2.5v2M1.9 5v2" stroke="#555" stroke-width="0.8"/></svg>
<svg class="i" style="left:562.5px;top:357.5px" width="7" height="5.5" viewBox="0 0 7 5.5"><path d="M0 0.6h4.5M0 2.4h4.5M0 4.3h2.5M3.6 3.8l1 1 2-2" fill="none" stroke="#555" stroke-width="0.8"/></svg>
<svg class="i" style="left:586.0px;top:357.0px" width="8" height="7" viewBox="0 0 8 7"><path d="M0 0.6h4.5M0 2.4h4.5M0 4.3h3M6 2.5v4M4 4.5h4" fill="none" stroke="#555" stroke-width="0.8"/></svg>
<svg class="i" style="left:610.0px;top:356.0px" width="8" height="8" viewBox="0 0 8 8"><path d="M2 0.4h4M1 1.8h6" stroke="#555" stroke-width="0.8"/><rect x="0.4" y="3.2" width="7.2" height="4.4" rx="0.8" fill="none" stroke="#555" stroke-width="0.9"/></svg>
<svg class="i" style="left:637.0px;top:356.0px" width="8" height="8" viewBox="0 0 8 8"><path d="M1 1l3 3 3-2.5M4 4L1 7.2" fill="none" stroke="#555" stroke-width="0.9"/><circle cx="1" cy="1" r="0.9" fill="#555"/><circle cx="7" cy="1.5" r="0.9" fill="#555"/><circle cx="1" cy="7.2" r="0.9" fill="#555"/></svg>
<svg class="i" style="left:661.5px;top:356.5px" width="7" height="7" viewBox="0 0 7 7"><path d="M0.7 7V4M2.5 7V2.8M4.3 7V1.6M6.1 7V0.4" stroke="#777" stroke-width="0.9"/></svg>
<svg class="i" style="left:685.0px;top:356.0px" width="8" height="8" viewBox="0 0 8 8"><circle cx="4" cy="4" r="3.5" fill="none" stroke="#555" stroke-width="0.8"/><path d="M4 3.5v2.5" stroke="#555" stroke-width="0.9"/><circle cx="4" cy="2.3" r="0.5" fill="#555"/></svg>
<svg class="i" style="left:886.5px;top:355.5px" width="8" height="7.5" viewBox="0 0 8 7.5"><path d="M1.3 3.8a3 3 0 1 0 0.8-2.1" fill="none" stroke="#333" stroke-width="0.9"/><path d="M0 3.3l1.3 1.6 1.4-1.6z" fill="#333"/><path d="M4.4 2.2v1.7h1.3" fill="none" stroke="#333" stroke-width="0.8"/></svg>
<svg class="i" style="left:907.0px;top:356.0px" width="2" height="7" viewBox="0 0 2 7"><circle cx="1" cy="0.9" r="0.8" fill="#333"/><circle cx="1" cy="3.5" r="0.8" fill="#333"/><circle cx="1" cy="6.1" r="0.8" fill="#333"/></svg>
<div class="a" style="left:533.4px;top:368.0px;width:376.0px;height:0.8px;background:#e6e6e6;"></div>
<div class="t" style="left:536.5px;top:381.91px;font-size:6.6px;line-height:8.58px;color:#222;font-weight:bold">Editor</div>
<div class="a" style="left:535.7px;top:392.5px;width:371.0px;height:44.0px;background:#f3f3f3;border-radius:6px"></div>
<div class="a" style="left:543.5px;top:404.0px;width:7.0px;height:6.6px;background:#d4d4d4;border-radius:1px"></div>
<div class="t" style="left:553.5px;top:402.71px;font-size:6.9px;line-height:8.97px;color:#333;">Vim 快捷键</div>
<div class="t" style="left:543.5px;top:413.97px;font-size:6.2px;line-height:8.06px;color:#999;">在代码笔记中启用 Vim 快捷键（不包含 ex 模式）</div>
<div class="t" style="left:536.5px;top:440.98px;font-size:6.8px;line-height:8.84px;color:#222;font-weight:bold">Appearance</div>
<div class="a" style="left:535.7px;top:452.0px;width:371.0px;height:134.6px;background:#f3f3f3;border-radius:6px"></div>
<div class="t" style="left:543.5px;top:462.31px;font-size:6.9px;line-height:8.97px;color:#444;">Color scheme</div>
<div class="a" style="left:543.5px;top:474.5px;width:173.0px;height:13.7px;background:#e3e3e3;border-radius:4px"></div>
<div class="t" style="left:548.5px;top:476.95px;font-size:7px;line-height:9.10px;color:#222;">VS Code Dark</div>
<svg class="i" style="left:706.0px;top:479.5px" width="6" height="4" viewBox="0 0 6 4"><path d="M0.5 0.5l2.5 2.5 2.5-2.5" fill="none" stroke="#333" stroke-width="1"/></svg>
<div class="a" style="left:723.8px;top:477.0px;width:7.0px;height:7.0px;background:#d0d0d0;border-radius:1px"></div>
<svg class="i" style="left:724.8px;top:478.5px" width="5" height="4" viewBox="0 0 5 4"><path d="M0.4 2l1.5 1.5L4.6 0.4" fill="none" stroke="#111" stroke-width="1"/></svg>
<div class="t" style="left:736.0px;top:476.01px;font-size:6.9px;line-height:8.97px;color:#333;">Word wrapping</div>
<div class="a" style="left:545.2px;top:494.8px;width:352.5px;height:82px;background:#1e1e1e;border-radius:3px;overflow:hidden">
<div class="a" style="left:0;top:0;width:352.5px;height:8.6px;background:#262626"></div>
<div class="t" style="left:5px;top:3.50px;font-size:4.9px;line-height:7px;font-family:'Liberation Mono',monospace;color:#6e7681">1</div>
<div class="t" style="left:18.1px;top:3.50px;font-size:4.9px;line-height:7px;font-family:'Liberation Mono',monospace;font-weight:bold"><span style="color:#5094d0">import</span><span style="color:#c8c8c8"> { </span><span style="color:#94c8ea">defaultKeymap</span><span style="color:#c8c8c8">, </span><span style="color:#94c8ea">history</span><span style="color:#c8c8c8">, </span><span style="color:#94c8ea">historyKeymap</span><span style="color:#c8c8c8"> } </span><span style="color:#5094d0">from</span> <span style="color:#c48c70">"@codemirror/commands"</span><span style="color:#c8c8c8">;</span></div>
<div class="t" style="left:5px;top:12.05px;font-size:4.9px;line-height:7px;font-family:'Liberation Mono',monospace;color:#6e7681">2</div>
<div class="t" style="left:18.1px;top:12.05px;font-size:4.9px;line-height:7px;font-family:'Liberation Mono',monospace;font-weight:bold"><span style="color:#5094d0">import</span><span style="color:#c8c8c8"> { </span><span style="color:#94c8ea">EditorView</span><span style="color:#c8c8c8">, </span><span style="color:#94c8ea">highlightActiveLine</span><span style="color:#c8c8c8">, </span><span style="color:#94c8ea">keymap</span><span style="color:#c8c8c8">, </span><span style="color:#94c8ea">lineNumbers</span><span style="color:#c8c8c8">, </span><span style="color:#94c8ea">placeholder</span><span style="color:#c8c8c8">, </span><span style="color:#94c8ea">ViewUpdate</span><span style="color:#c8c8c8">, </span><span style="color:#5094d0">type</span> <span style="color:#94c8ea">EditorViewConfig</span></div>
<div class="t" style="left:5px;top:20.60px;font-size:4.9px;line-height:7px;font-family:'Liberation Mono',monospace;color:#6e7681"></div>
<div class="t" style="left:18.1px;top:20.60px;font-size:4.9px;line-height:7px;font-family:'Liberation Mono',monospace;font-weight:bold"><span style="color:#c8c8c8">} </span><span style="color:#5094d0">from</span> <span style="color:#c48c70">"@codemirror/view"</span><span style="color:#c8c8c8">;</span></div>
<div class="t" style="left:5px;top:29.15px;font-size:4.9px;line-height:7px;font-family:'Liberation Mono',monospace;color:#6e7681">3</div>
<div class="t" style="left:18.1px;top:29.15px;font-size:4.9px;line-height:7px;font-family:'Liberation Mono',monospace;font-weight:bold"><span style="color:#5094d0">import</span><span style="color:#c8c8c8"> { </span><span style="color:#94c8ea">defaultHighlightStyle</span><span style="color:#c8c8c8">, </span><span style="color:#94c8ea">StreamLanguage</span><span style="color:#c8c8c8">, </span><span style="color:#94c8ea">syntaxHighlighting</span><span style="color:#c8c8c8">, </span><span style="color:#94c8ea">indentUnit</span><span style="color:#c8c8c8">, </span><span style="color:#94c8ea">bracketMatching</span><span style="color:#c8c8c8">, </span><span style="color:#94c8ea">foldGutter</span><span style="color:#c8c8c8"> }</span></div>
<div class="t" style="left:5px;top:37.70px;font-size:4.9px;line-height:7px;font-family:'Liberation Mono',monospace;color:#6e7681"></div>
<div class="t" style="left:18.1px;top:37.70px;font-size:4.9px;line-height:7px;font-family:'Liberation Mono',monospace;font-weight:bold"><span style="color:#5094d0">from</span> <span style="color:#c48c70">"@codemirror/language"</span><span style="color:#c8c8c8">;</span></div>
<div class="t" style="left:5px;top:46.25px;font-size:4.9px;line-height:7px;font-family:'Liberation Mono',monospace;color:#6e7681">4</div>
<div class="t" style="left:18.1px;top:46.25px;font-size:4.9px;line-height:7px;font-family:'Liberation Mono',monospace;font-weight:bold"><span style="color:#5094d0">import</span><span style="color:#c8c8c8"> { </span><span style="color:#94c8ea">Compartment</span><span style="color:#c8c8c8">, </span><span style="color:#94c8ea">EditorState</span><span style="color:#c8c8c8">, </span><span style="color:#5094d0">type</span> <span style="color:#94c8ea">Extension</span><span style="color:#c8c8c8"> } </span><span style="color:#5094d0">from</span> <span style="color:#c48c70">"@codemirror/state"</span><span style="color:#c8c8c8">;</span></div>
<div class="t" style="left:5px;top:54.80px;font-size:4.9px;line-height:7px;font-family:'Liberation Mono',monospace;color:#6e7681">5</div>
<div class="t" style="left:18.1px;top:54.80px;font-size:4.9px;line-height:7px;font-family:'Liberation Mono',monospace;font-weight:bold"><span style="color:#5094d0">import</span><span style="color:#c8c8c8"> { </span><span style="color:#94c8ea">highlightSelectionMatches</span><span style="color:#c8c8c8"> } </span><span style="color:#5094d0">from</span> <span style="color:#c48c70">"@codemirror/search"</span><span style="color:#c8c8c8">;</span></div>
<div class="t" style="left:5px;top:63.35px;font-size:4.9px;line-height:7px;font-family:'Liberation Mono',monospace;color:#6e7681">6</div>
<div class="t" style="left:18.1px;top:63.35px;font-size:4.9px;line-height:7px;font-family:'Liberation Mono',monospace;font-weight:bold"><span style="color:#5094d0">import</span><span style="color:#c8c8c8"> { </span><span style="color:#94c8ea">vim</span><span style="color:#c8c8c8"> } </span><span style="color:#5094d0">from</span> <span style="color:#c48c70">"@replit/codemirror-vim"</span><span style="color:#c8c8c8">;</span></div>
<div class="t" style="left:5px;top:71.90px;font-size:4.9px;line-height:7px;font-family:'Liberation Mono',monospace;color:#6e7681">7</div>
<div class="t" style="left:18.1px;top:71.90px;font-size:4.9px;line-height:7px;font-family:'Liberation Mono',monospace;font-weight:bold"><span style="color:#5094d0">import</span> <span style="color:#94c8ea">byMimeType</span> <span style="color:#5094d0">from</span> <span style="color:#c48c70">"./syntax_highlighting.js"</span><span style="color:#c8c8c8">;</span></div>
<div class="t" style="left:5px;top:80.45px;font-size:4.9px;line-height:7px;font-family:'Liberation Mono',monospace;color:#6e7681">8</div>
<div class="t" style="left:18.1px;top:80.45px;font-size:4.9px;line-height:7px;font-family:'Liberation Mono',monospace;font-weight:bold"><span style="color:#5094d0">import</span> <span style="color:#94c8ea">createDarkThemeExtension</span> <span style="color:#5094d0">from</span> <span style="color:#c48c70">"./themes/vscode-dark.js"</span><span style="color:#c8c8c8">;</span></div>
</div>
<div class="t" style="left:537.0px;top:591.14px;font-size:6.7px;line-height:8.71px;color:#222;font-weight:bold;letter-spacing:-0.1px">下拉菜单可用的MIME文件类型</div>
<div class="a" style="left:535.9px;top:602.6px;width:371.0px;height:80.0px;background:#f3f3f3;border-radius:6px"></div>
<div class="a" style="left:543.7px;top:613.1px;width:6.8px;height:6.8px;background:#d3d3d3;border-radius:1px"></div>
<svg class="i" style="left:544.7px;top:614.4px" width="5" height="4" viewBox="0 0 5 4"><path d="M0.4 2l1.5 1.5L4.6 0.4" fill="none" stroke="#111" stroke-width="1"/></svg>
<div class="t" style="left:553.4px;top:612.91px;font-size:6.9px;line-height:8.97px;color:#333;">Plain text</div>
<div class="t" style="left:543.7px;top:628.51px;font-size:6.9px;line-height:8.97px;color:#222;font-weight:bold">A</div>
<div class="a" style="left:543.7px;top:637.9px;width:6.8px;height:6.8px;background:#d3d3d3;border-radius:1px"></div>
<div class="t" style="left:553.4px;top:637.72px;font-size:6.9px;line-height:8.97px;color:#333;">APL</div>
<div class="a" style="left:543.7px;top:647.6px;width:6.8px;height:6.8px;background:#d3d3d3;border-radius:1px"></div>
<div class="t" style="left:553.4px;top:647.41px;font-size:6.9px;line-height:8.97px;color:#333;">ASN.1</div>
<div class="a" style="left:543.7px;top:657.1px;width:6.8px;height:6.8px;background:#d3d3d3;border-radius:1px"></div>
<div class="t" style="left:553.4px;top:656.91px;font-size:6.9px;line-height:8.97px;color:#333;">ASP.NET</div>
<div class="a" style="left:543.7px;top:666.9px;width:6.8px;height:6.8px;background:#d3d3d3;border-radius:1px"></div>
<div class="t" style="left:553.4px;top:666.72px;font-size:6.9px;line-height:8.97px;color:#333;">Asterisk</div>
<div class="a" style="left:664.8px;top:613.1px;width:6.8px;height:6.8px;background:#d3d3d3;border-radius:1px"></div>
<svg class="i" style="left:665.8px;top:614.4px" width="5" height="4" viewBox="0 0 5 4"><path d="M0.4 2l1.5 1.5L4.6 0.4" fill="none" stroke="#111" stroke-width="1"/></svg>
<div class="t" style="left:674.5px;top:612.91px;font-size:6.9px;line-height:8.97px;color:#333;">HTTP</div>
<div class="a" style="left:664.8px;top:623.3px;width:6.8px;height:6.8px;background:#d3d3d3;border-radius:1px"></div>
<div class="t" style="left:674.5px;top:623.12px;font-size:6.9px;line-height:8.97px;color:#333;">HXML</div>
<div class="t" style="left:664.8px;top:638.31px;font-size:6.9px;line-height:8.97px;color:#222;font-weight:bold">I</div>
<div class="a" style="left:664.8px;top:647.9px;width:6.8px;height:6.8px;background:#d3d3d3;border-radius:1px"></div>
<div class="t" style="left:674.5px;top:647.72px;font-size:6.9px;line-height:8.97px;color:#333;">IDL</div>
<div class="t" style="left:664.8px;top:662.72px;font-size:6.9px;line-height:8.97px;color:#222;font-weight:bold">J</div>
<div class="a" style="left:785.8px;top:613.3px;width:6.8px;height:6.8px;background:#d3d3d3;border-radius:1px"></div>
<div class="t" style="left:795.2px;top:613.12px;font-size:6.9px;line-height:8.97px;color:#333;">R</div>
<div class="a" style="left:785.8px;top:623.3px;width:6.8px;height:6.8px;background:#d3d3d3;border-radius:1px"></div>
<div class="t" style="left:795.2px;top:623.12px;font-size:6.9px;line-height:8.97px;color:#333;">reStructuredText</div>
<div class="a" style="left:785.8px;top:633.4px;width:6.8px;height:6.8px;background:#d3d3d3;border-radius:1px"></div>
<div class="t" style="left:795.2px;top:633.22px;font-size:6.9px;line-height:8.97px;color:#333;">RPM Changes</div>
<div class="a" style="left:785.8px;top:643.1px;width:6.8px;height:6.8px;background:#d3d3d3;border-radius:1px"></div>
<div class="t" style="left:795.2px;top:642.91px;font-size:6.9px;line-height:8.97px;color:#333;">RPM Spec</div>
<div class="a" style="left:785.8px;top:653.1px;width:6.8px;height:6.8px;background:#d3d3d3;border-radius:1px"></div>
<svg class="i" style="left:786.8px;top:654.4px" width="5" height="4" viewBox="0 0 5 4"><path d="M0.4 2l1.5 1.5L4.6 0.4" fill="none" stroke="#111" stroke-width="1"/></svg>
<div class="t" style="left:795.2px;top:652.91px;font-size:6.9px;line-height:8.97px;color:#333;">Ruby</div>
<div class="a" style="left:785.8px;top:663.3px;width:6.8px;height:6.8px;background:#d3d3d3;border-radius:1px"></div>
<div class="t" style="left:795.2px;top:663.12px;font-size:6.9px;line-height:8.97px;color:#333;">Rust</div>
<div class="a" style="left:361.0px;top:670.2px;width:562.0px;height:5.5px;background:#0b0b0b;"></div>
<div class="a" style="left:361.0px;top:675.5px;width:562.0px;height:8.0px;background:#232323;"></div>
</div>
<!-- ===== /LAPTOP ===== -->
</div>
</body></html>
